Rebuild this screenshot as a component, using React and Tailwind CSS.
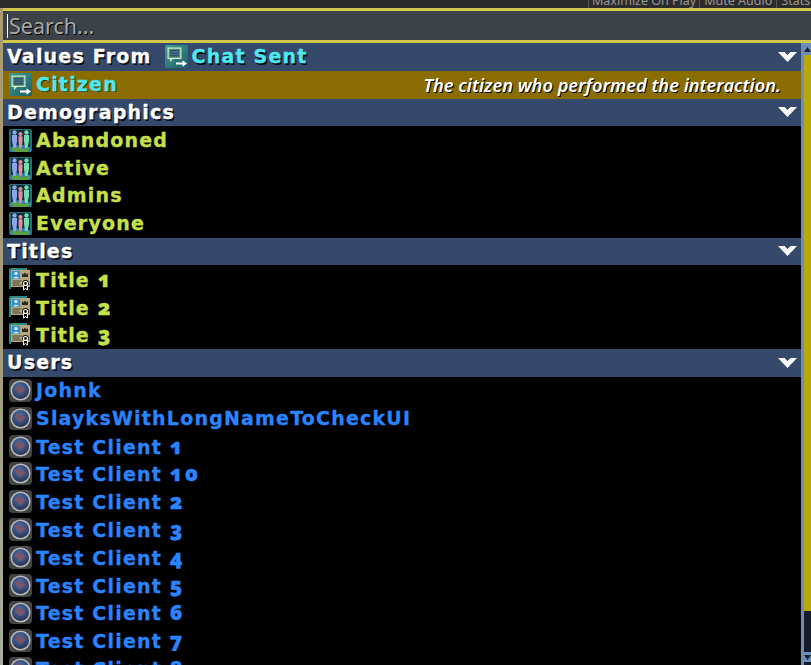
const F = { fontFamily: '"Noto Sans", sans-serif' };
const D = { fontFamily: '"DejaVu Sans", sans-serif' };

function ChatIcon({ id }) {
  return (
    <svg width="23" height="23" viewBox="0 0 23 23" className="shrink-0">
      <defs>
        <linearGradient id={id} x1="0" y1="0" x2="1" y2="1">
          <stop offset="0" stopColor="#3f9c98" />
          <stop offset="1" stopColor="#1f5f66" />
        </linearGradient>
      </defs>
      <rect width="23" height="23" rx="2" fill={`url(#${id})`} />
      <path d="M2.5 2.5h14v11.5H8l-3 3v-3H2.5z" fill="#cfeeca" />
      <path d="M3.7 3.7h11.6v9.1H3.7z" fill="#4f8f78" />
      <path d="M5 5.8h9M5 8.2h9M5 10.6h9" stroke="#2f4f78" strokeWidth="1.6" />
      <path d="M11 17.5h6.5v-2.3l4.5 3.3-4.5 3.3v-2.3H11z" fill="#fff" />
    </svg>
  );
}

function PeopleIcon() {
  return (
    <svg width="23" height="23" viewBox="0 0 23 23" className="shrink-0">
      <rect width="23" height="23" rx="2" fill="#2a6f78" />
      <rect x="2" y="1" width="19" height="17" fill="#12303a" />
      <ellipse cx="11.5" cy="21" rx="11" ry="5" fill="#2f7fb0" />
      <path d="M2 20c3-3 6-2 8-1s5 1 11 0l-2 4H5z" fill="#58a040" />
      <g fill="#8da4e8"><circle cx="5.5" cy="3.5" r="2.2" /><path d="M3 6h5v6l-1 7H4.5L3 12z" /></g>
      <g fill="#e88c9c"><circle cx="11.5" cy="5" r="2" /><path d="M9.5 7.2h4v5l-1 7h-2l-1-7z" /></g>
      <g fill="#6fe0b0"><circle cx="17.5" cy="3.5" r="2.2" /><path d="M15 6h5v6l-1.5 7H16l-1-7z" /></g>
    </svg>
  );
}

function TitleIcon() {
  return (
    <svg width="23" height="23" viewBox="0 0 23 23" className="shrink-0">
      <path d="M0 2a2 2 0 0 1 2-2h16v2H2v19H0z" fill="#2a8a88" />
      <rect x="2" y="2" width="19" height="17" fill="#b5a67e" />
      <rect x="3" y="3" width="8" height="8" fill="#2f8fd0" />
      <circle cx="7" cy="5.5" r="1.8" fill="#cfe8f8" />
      <path d="M4.2 10.5c0-2.5 5.6-2.5 5.6 0z" fill="#cfe8f8" />
      <path d="M13 5l1.5 1.5L16 4.5l1.5 2L19 5v4h-6z" fill="#2a2a22" />
      <path d="M3.5 13h9M3.5 15h7M3.5 17h9" stroke="#4a4434" strokeWidth="1" />
      <circle cx="16.5" cy="15.5" r="3.4" fill="#111" />
      <circle cx="16.5" cy="15.5" r="2" fill="none" stroke="#fff" strokeWidth="1.2" />
      <path d="M14.5 17.5v4.5l2-1.5 2 1.5v-4.5z" fill="#111" stroke="#fff" strokeWidth="1" />
    </svg>
  );
}

function UserIcon({ id }) {
  return (
    <svg width="23" height="23" viewBox="0 0 23 23" className="shrink-0">
      <defs>
        <radialGradient id={id} cx="0.45" cy="0.35" r="0.7">
          <stop offset="0" stopColor="#4d6ea8" />
          <stop offset="0.65" stopColor="#34466e" />
          <stop offset="1" stopColor="#1c2236" />
        </radialGradient>
      </defs>
      <rect width="23" height="23" rx="4" fill="#444" />
      <circle cx="11.5" cy="11.5" r="9.3" fill={`url(#${id})`} stroke="#b9b9b9" strokeWidth="1.6" />
      <path d="M6 9c2-3 5-3 6-1s3 0 4 2-2 2-3 4-3 1-4-1-4-2-3-4z" fill="#77566a" />
    </svg>
  );
}

function Chevron() {
  return (
    <svg width="19" height="10" viewBox="0 0 19 10" className="shrink-0">
      <path d="M0 0h6.5L9.5 3 12.5 0H19L9.5 10z" fill="#fff" />
    </svg>
  );
}

function Label({ text }) {
  const m = text.match(/^(.*?)(\d+)$/);
  if (!m) return <span>{text}</span>;
  return (
    <span>
      {m[1]}
      <span className="text-[21px] font-black tracking-[2.5px] oldstyle-nums" style={F}>{m[2]}</span>
    </span>
  );
}

function Header({ children }) {
  return (
    <div className="flex h-[27.8px] shrink-0 items-center justify-between bg-[#35496a] pl-[4px] pr-[4px] text-[19px] font-bold leading-none tracking-[1.2px] text-white [-webkit-text-stroke:0.3px] [text-shadow:1.5px_1.5px_0_#0b0f18]" style={D}>
      <div className="flex items-center gap-[13px]">{children}</div>
      <Chevron />
    </div>
  );
}

function Row({ icon, label, color }) {
  return (
    <div className="flex h-[27.8px] shrink-0 items-center gap-[4px] pl-[6px] text-[19px] font-bold leading-none tracking-[1.2px] whitespace-nowrap [-webkit-text-stroke:0.3px]" style={{ ...D, color }}>
      {icon}
      <Label text={label} />
    </div>
  );
}

const YELLOW = "#c7e04a";
const BLUE = "#2b84ff";

export default function App() {
  const demo = ["Abandoned", "Active", "Admins", "Everyone"];
  const titles = ["Title 1", "Title 2", "Title 3"];
  const users = ["Johnk", "SlayksWithLongNameToCheckUI", "Test Client 1", "Test Client 10", "Test Client 2", "Test Client 3", "Test Client 4", "Test Client 5", "Test Client 6", "Test Client 7", "Test Client 8"];
  return (
    <div className="flex h-[665px] w-[811px] flex-col overflow-hidden bg-[#2b2b2b]" style={F}>
      <div className="flex h-[8px] shrink-0 items-end overflow-hidden pl-[588px] text-[12.5px] leading-[14px] text-[#9a9a9a]">
        <div className="flex whitespace-nowrap">
          <span className="border-l border-[#555] px-[3px]">Maximize On Play</span>
          <span className="border-l border-[#555] px-[4px]">Mute Audio</span>
          <span className="border-l border-[#555] px-[4px]">Stats</span>
        </div>
      </div>
      <div className="flex min-h-0 flex-1">
        <div className="w-[3px] shrink-0 bg-gradient-to-b from-[#a89c70] via-[#a39a78] to-[#a8aca4]" />
        <div className="flex min-w-0 flex-1 flex-col">
          <div className="flex h-[35px] shrink-0 items-center border-y-[3px] border-[#d2c84c] bg-[#3c4248] pl-[4px] text-[21.5px] leading-none text-[#a8a8a8] [text-shadow:1px_1px_0_#000]">
            <span className="mr-[1px] h-[24px] w-[1px] bg-white" />
            Search...
          </div>
          <div className="flex min-h-0 flex-1">
            <div className="flex min-w-0 flex-1 flex-col overflow-hidden bg-black">
              <Header>
                <span>Values From</span>
                <span className="flex items-center gap-[4px] text-[#4fe8f0]"><ChatIcon id="c1" />Chat Sent</span>
              </Header>
              <div className="flex h-[27.8px] shrink-0 items-center justify-between bg-[#8a6c00] pl-[6px] pr-[20px]">
                <div className="flex items-center gap-[4px] text-[19px] font-bold leading-none tracking-[1.2px] text-[#4fe8f0] [-webkit-text-stroke:0.3px] [text-shadow:1px_1px_0_#3a2c00]" style={D}>
                  <ChatIcon id="c2" />Citizen
                </div>
                <div className="text-[18.2px] font-semibold italic leading-none text-white [text-shadow:1px_1px_0_#000]">The citizen who performed the interaction.</div>
              </div>
              <Header>Demographics</Header>
              {demo.map((d) => <Row key={d} icon={<PeopleIcon />} label={d} color={YELLOW} />)}
              <Header>Titles</Header>
              {titles.map((d) => <Row key={d} icon={<TitleIcon />} label={d} color={YELLOW} />)}
              <Header>Users</Header>
              {users.map((d, i) => <Row key={d} icon={<UserIcon id={`u${i}`} />} label={d} color={BLUE} />)}
            </div>
            <div className="flex w-[10px] shrink-0 flex-col border-l-[3px] border-[#6e8cb8] bg-[#141c28]">
              <div className="flex h-[12px] shrink-0 items-center justify-center bg-[#6e8cb8]">
                <svg width="7" height="5" viewBox="0 0 7 5"><path d="M3.5 0L7 5H0z" fill="#1a2230" /></svg>
              </div>
              <div className="h-[556px] shrink-0 bg-[#b8a808]" />
              <div className="min-h-0 flex-1" />
              <div className="mb-[3px] flex h-[10px] shrink-0 items-center justify-center bg-[#6e8cb8]">
                <svg width="7" height="5" viewBox="0 0 7 5"><path d="M0 0h7L3.5 5z" fill="#1a2230" /></svg>
              </div>
            </div>
          </div>
        </div>
      </div>
    </div>
  );
}
